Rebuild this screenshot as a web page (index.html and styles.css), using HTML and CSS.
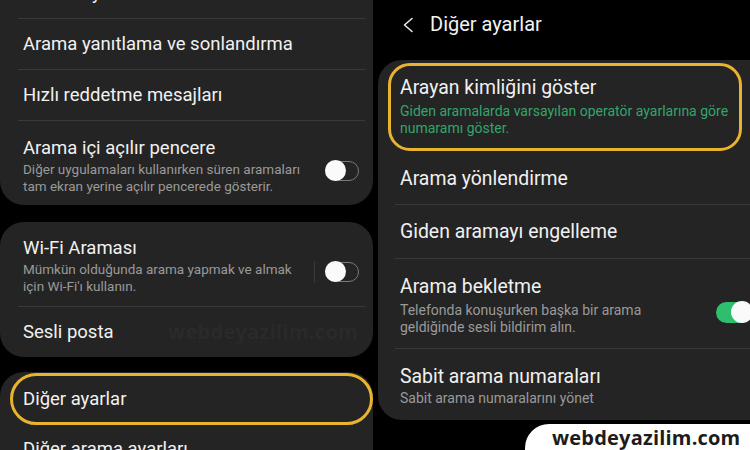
FILE: index.html
```html
<!DOCTYPE html>
<html lang="tr">
<head>
<meta charset="utf-8">
<link rel="stylesheet" href="styles.css">
</head>
<body>
<div class="screen">
  <div class="left">
    <div class="card c1">
      <div class="row"><span class="t">Arama uyarıları ve zil sesleri</span></div>
      <div class="row"><span class="t">Arama yanıtlama ve sonlandırma</span></div>
      <div class="row"><span class="t">Hızlı reddetme mesajları</span></div>
      <div class="row tall popup last">
        <div class="txt">
          <div class="t">Arama içi açılır pencere</div>
          <div class="s">Diğer uygulamaları kullanırken süren aramaları<br>tam ekran yerine açılır pencerede gösterir.</div>
        </div>
        <span class="toggle off"><span class="knob"></span></span>
      </div>
    </div>
    <div class="card c2">
      <div class="row tall wifi">
        <div class="txt">
          <div class="t">Wi-Fi Araması</div>
          <div class="s">Mümkün olduğunda arama yapmak ve almak<br>için Wi-Fi'ı kullanın.</div>
        </div>
        <span class="vsep"></span>
        <span class="toggle off"><span class="knob"></span></span>
      </div>
      <div class="row short last"><span class="t">Sesli posta</span></div>
      <span class="ghost">webdeyazilim.com</span>
    </div>
    <div class="card c3">
      <div class="hl-left"><span class="t">Diğer ayarlar</span></div>
      <div class="row last"><span class="t">Diğer arama ayarları</span></div>
    </div>
  </div>
  <div class="right">
    <div class="header">
      <svg class="back" width="12" height="16" viewBox="0 0 12 16"><polyline points="10,1.5 2.5,8 10,14.5" fill="none" stroke="#e8e8e8" stroke-width="1.6" stroke-linecap="round" stroke-linejoin="round"/></svg>
      <span class="htitle">Diğer ayarlar</span>
    </div>
    <div class="card rc">
      <div class="hl-right">
        <div class="t">Arayan kimliğini göster</div>
        <div class="s green">Giden aramalarda varsayılan operatör ayarlarına göre<br>numaramı göster.</div>
      </div>
      <div class="rrow r2"><span class="t">Arama yönlendirme</span></div>
      <div class="rrow r3"><span class="t">Giden aramayı engelleme</span></div>
      <div class="rrow r4">
        <div class="txt">
          <div class="t">Arama bekletme</div>
          <div class="s">Telefonda konuşurken başka bir arama<br>geldiğinde sesli bildirim alın.</div>
        </div>
        <span class="toggle on"><span class="knob"></span></span>
      </div>
      <div class="rrow r5 last">
        <div class="txt">
          <div class="t">Sabit arama numaraları</div>
          <div class="s">Sabit arama numaralarını yönet</div>
        </div>
      </div>
    </div>
  </div>
  <div class="badge">webdeyazilim.com</div>
</div>
</body>
</html>
```
FILE: styles.css
```css
* { box-sizing: border-box; }
html, body { margin: 0; padding: 0; background: #000; }
body { width: 750px; height: 450px; overflow: hidden; font-family: Roboto, "Noto Sans", sans-serif; color: #f1f1f1; }
.screen { position: relative; width: 750px; height: 450px; display: flex; overflow: hidden; background: #000; }

.left { width: 375px; flex: none; display: flex; flex-direction: column; }
.right { width: 375px; flex: none; display: flex; flex-direction: column; }

.card { background: #242424; border-radius: 24px; position: relative; }

/* left cards */
.left .card { width: 373px; padding: 0 8px 0 18px; }
.c1 { margin-top: -32px; }
.c2 { margin-top: 17px; }
.c3 { margin-top: 15px; padding-top: 1px !important; height: 120px; }

.row { display: flex; align-items: center; height: 51px; border-bottom: 1px solid #393939; padding-left: 5px; }
.row.last { border-bottom: none; }
.left .t { font-size: 18.5px; line-height: 22px; color: #f1f1f1; }
.left .s { font-size: 13.5px; line-height: 16.5px; color: #9a9a9a; margin-top: 2px; }
.row.tall { height: 84px; align-items: flex-start; padding-top: 16px; }
.row.tall .txt { flex: 1; }
.row.wifi { height: 85px; padding-top: 15px; }
.row.short { height: 50px; }
.row .toggle { align-self: center; margin-right: 6px; }

.vsep { align-self: center; width: 1px; height: 22px; background: #3a3a3a; margin-right: 10px; }

.toggle { position: relative; width: 34px; height: 20px; border-radius: 10px; flex: none; }
.toggle.off { border: 1.5px solid #7a7a7a; }
.toggle.off .knob { position: absolute; left: -1.5px; top: -2px; width: 21px; height: 21px; border-radius: 50%; background: #fafafa; }
.toggle.on { background: #2fbd6f; width: 36px; height: 21px; border-radius: 11px; }
.toggle.on .knob { position: absolute; right: -1px; top: -0.5px; width: 22px; height: 22px; border-radius: 50%; background: #fafafa; }

.hl-left { height: 52px; margin: 0 -8px 0 -8px; border: 3px solid #e9b22f; border-radius: 26px; display: flex; align-items: center; padding-left: 10px; }
.c3 .row { height: 48px; }

.ghost { position: absolute; left: 168px; top: 96px; font-family: "Open Sans", sans-serif; font-weight: 700; font-size: 20px; letter-spacing: 0.3px; color: rgba(255,255,255,0.045); }

/* right */
.header { height: 60px; display: flex; align-items: center; padding-left: 27px; padding-bottom: 12px; }
.back { margin-right: 16px; margin-top: 2px; }
.htitle { font-size: 20px; color: #f3f3f3; }

.rc { margin-left: 3px; width: 384px; padding: 3px 10px 0 17px; height: 360px; border-radius: 24px 0 0 24px; }
.right .t { font-size: 19.4px; line-height: 22px; color: #f1f1f1; }
.right .s { font-size: 14px; line-height: 17px; color: #9a9a9a; }
.s.green { color: #33a56a; }

.hl-right { width: 354px; height: 88px; margin-left: -7px; border: 3px solid #e9b22f; border-radius: 22px; padding: 11px 0 0 9px; }
.hl-right .s { margin-top: 3.5px; }

.rrow { display: flex; border-bottom: 1px solid #393939; padding-left: 5px; }
.rrow.last { border-bottom: none; }
.r2 { height: 53px; margin-top: 1px; align-items: center; padding-top: 2px; }
.r3 { height: 54px; align-items: center; padding-top: 1px; }
.r4 { height: 90px; padding-top: 17px; align-items: flex-start; }
.r4 .txt { flex: 1; }
.r4 .s { margin-top: 3.5px; }
.r4 .toggle { align-self: center; }
.r5 { height: 72px; padding-top: 17px; }
.r5 .s { margin-top: 1.5px; }

.badge { position: absolute; left: 525px; top: 424px; width: 240px; height: 40px; background: #fff; border-top-left-radius: 24px; padding-left: 27px; padding-top: 1px; font-family: "Open Sans", sans-serif; font-weight: 700; font-size: 20px; line-height: 26px; color: #1c1c1c; letter-spacing: 0.2px; }
```
